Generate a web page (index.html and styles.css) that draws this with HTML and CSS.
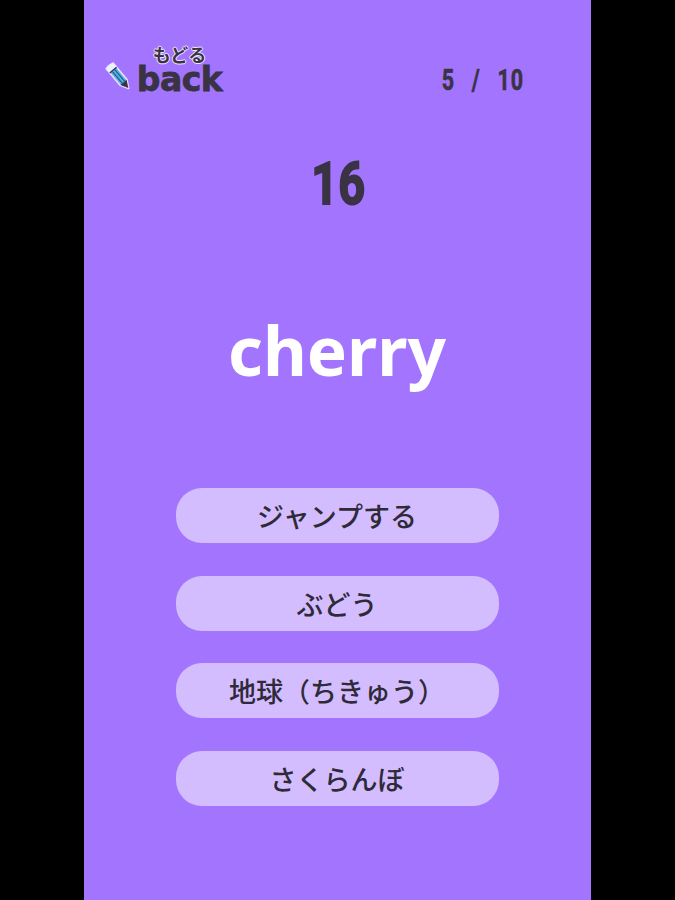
FILE: index.html
```html
<!DOCTYPE html>
<html lang="ja">
<head>
<meta charset="utf-8">
<title>cherry</title>
<link rel="stylesheet" href="styles.css">
</head>
<body>
<main class="panel">
  <header class="top">
    <button class="back" type="button">
      <svg class="pencil" width="28" height="32" viewBox="0 0 28 32" aria-hidden="true">
        <g transform="rotate(-40 14 16)">
          <path d="M9.5 1.5 Q14 0 18.5 1.5 V23 L14 31 L9.5 23 Z" fill="#58b2e8" stroke="#e9e1fb" stroke-width="1.6" stroke-linejoin="round"/>
          <path d="M9.5 1.5 Q14 0 18.5 1.5 V6.5 H9.5 Z" fill="#eef0f8"/>
          <path d="M9.5 7 H18.5" stroke="#2f3a58" stroke-width="1.4"/>
          <path d="M12.5 8 V23 M15.5 8 V23" stroke="#27608f" stroke-width="1.3"/>
          <path d="M10 23 L14 30.5 L18 23 Z" fill="#3a3344"/>
        </g>
      </svg>
      <span class="back-text">
        <span class="back-ja">もどる</span>
        <span class="back-en">back</span>
      </span>
    </button>
    <div class="count"><span>5</span><span>/</span><span>10</span></div>
  </header>
  <div class="timer">16</div>
  <h1 class="word">cherry</h1>
  <div class="choices">
    <button class="choice" type="button">ジャンプする</button>
    <button class="choice" type="button">ぶどう</button>
    <button class="choice" type="button">地球（ちきゅう）</button>
    <button class="choice" type="button">さくらんぼ</button>
  </div>
</main>
</body>
</html>
```
FILE: styles.css
```css
* { box-sizing: border-box; }
html, body { margin: 0; height: 100%; }
body {
  background: #000;
  display: flex;
  justify-content: center;
  overflow: hidden;
}
.panel {
  width: 507px;
  height: 900px;
  margin-left: -1px;
  background: #a375ff;
  display: flex;
  flex-direction: column;
  align-items: center;
  font-family: "Noto Sans", "Noto Sans CJK JP", sans-serif;
}
.top {
  width: 100%;
  height: 112px;
  padding: 44px 67px 0 21px;
  display: flex;
  justify-content: space-between;
  align-items: flex-start;
}
.back {
  display: flex;
  align-items: flex-end;
  gap: 2px;
  padding: 0;
  border: 0;
  background: none;
}
.pencil { margin-bottom: 2px; }
.back-text {
  display: flex;
  flex-direction: column;
  align-items: center;
}
.back-ja {
  font: 700 18px/20px "Noto Sans CJK JP", sans-serif;
  color: #3a3344;
  text-shadow: 1px 0 0 #eee6ff, -1px 0 0 #eee6ff, 0 1px 0 #eee6ff, 0 -1px 0 #eee6ff;
  margin-bottom: 1px;
  position: relative;
  z-index: 1;
}
.back-en {
  font: 700 33px/30px "DejaVu Sans", sans-serif;
  color: #3a3344;
  width: 90px;
  letter-spacing: -0.5px;
  -webkit-text-stroke: 0.8px #3a3344;
}
.count {
  margin-top: 18px;
  display: flex;
  gap: 23px;
  font: 700 29px/36px "Roboto", sans-serif;
  color: #3a3344;
  -webkit-text-stroke: 0.6px #3a3344;
  transform: scaleX(0.74);
  transform-origin: right center;
  letter-spacing: 1px;
}
.timer {
  margin-top: 32px;
  padding-left: 2px;
  height: 80px;
  font: 700 60px/80px "Roboto", sans-serif;
  color: #3a3344;
  -webkit-text-stroke: 2px #3a3344;
  transform: scaleX(0.78);
}
.word {
  margin: 76px 0 0;
  height: 100px;
  font: 700 67.5px/100px "Noto Sans", "Open Sans", sans-serif;
  color: #fff;
}
.choices {
  margin-top: 88px;
  width: 323px;
  display: flex;
  flex-direction: column;
  gap: 32.5px;
}
.choice {
  height: 55px;
  padding: 0;
  border: 0;
  border-radius: 26px;
  background: #d3bdff;
  color: #2f2a38;
  font: 500 27px/55px "Noto Sans CJK JP", sans-serif;
}
```
